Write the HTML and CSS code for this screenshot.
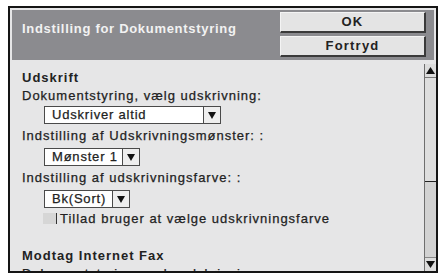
FILE: index.html
```html
<!DOCTYPE html>
<html>
<head>
<meta charset="utf-8">
<link rel="stylesheet" href="styles.css">
</head>
<body>
<div class="frame">
  <div class="header">
    <div class="title">Indstilling for Dokumentstyring</div>
    <div class="buttons">
      <div class="btn">OK</div>
      <div class="btn">Fortryd</div>
    </div>
  </div>
  <div class="content">
    <div class="list">
      <div class="section">Udskrift</div>
      <div class="label">Dokumentstyring, vælg udskrivning:</div>
      <div class="select sel-wide first"><span class="val">Udskriver altid</span><span class="arrow"><svg width="8" height="7" viewBox="0 0 8 7"><polygon points="0,0 8,0 4,7" fill="#111"/></svg></span></div>
      <div class="label gap">Indstilling af Udskrivningsmønster: :</div>
      <div class="select sel-mid"><span class="val">Mønster 1</span><span class="arrow"><svg width="8" height="7" viewBox="0 0 8 7"><polygon points="0,0 8,0 4,7" fill="#111"/></svg></span></div>
      <div class="label gap">Indstilling af udskrivningsfarve: :</div>
      <div class="select sel-small"><span class="val">Bk(Sort)</span><span class="arrow"><svg width="8" height="7" viewBox="0 0 8 7"><polygon points="0,0 8,0 4,7" fill="#111"/></svg></span></div>
      <div class="check"><span class="box"></span><span>Tillad bruger at vælge udskrivningsfarve</span></div>
      <div class="section sec2">Modtag Internet Fax</div>
      <div class="label">Dokumentstyring, vælg udskrivning:</div>
    </div>
    <div class="scrollbar">
      <div class="sb-btn"><svg width="9" height="7" viewBox="0 0 9 7"><polygon points="4.5,0 9,7 0,7" fill="#111"/></svg></div>
      <div class="thumb"></div>
      <div class="track"></div>
      <div class="sb-btn"><svg width="9" height="7" viewBox="0 0 9 7"><polygon points="0,0 9,0 4.5,7" fill="#111"/></svg></div>
    </div>
  </div>
</div>
</body>
</html>
```
FILE: styles.css
```css
html, body {
  margin: 0;
  padding: 0;
  background: #ffffff;
}
body {
  font-family: "Liberation Sans", Arial, sans-serif;
  font-size: 13px;
  color: #222;
}
.frame {
  margin: 6px 0 0 8px;
  width: 430px;
  height: 267px;
  box-sizing: border-box;
  border: 2px solid #151515;
  background: #e6e6e7;
  display: flex;
  flex-direction: column;
  overflow: hidden;
}
.header {
  margin: 2px 2px 0 2px;
  height: 50px;
  flex: none;
  background: #8b8b8f;
  display: flex;
  align-items: flex-start;
  justify-content: space-between;
}
.title {
  margin: 12px 0 0 10px;
  line-height: 14px;
  color: #f2f2f2;
  font-weight: bold;
  letter-spacing: 0.7px;
}
.buttons {
  margin: 2px 8px 0 0;
  display: flex;
  flex-direction: column;
  gap: 3px;
}
.btn {
  width: 146px;
  height: 21px;
  box-sizing: border-box;
  background: #e4e4e4;
  border-top: 1px solid #f4f4f4;
  border-left: 1px solid #f4f4f4;
  border-right: 2px solid #3a3a3a;
  border-bottom: 2px solid #3a3a3a;
  text-align: center;
  line-height: 18px;
  font-weight: bold;
  color: #222;
  letter-spacing: 1.2px;
}
.content {
  flex: 1;
  display: flex;
  min-height: 0;
}
.list {
  flex: 1;
  padding: 9px 0 0 12px;
  overflow: hidden;
  display: flex;
  flex-direction: column;
  align-items: flex-start;
}
.section {
  height: 18px;
  line-height: 18px;
  font-weight: bold;
  letter-spacing: 1px;
}
.sec2 {
  margin-top: 21px;
}
.label {
  height: 18px;
  line-height: 18px;
  letter-spacing: 1px;
  white-space: nowrap;
  -webkit-text-stroke: 0.25px #222;
}
.gap {
  margin-top: 3px;
}
.select {
  margin: 3px 0 0 22px;
  height: 18px;
  box-sizing: border-box;
  border: 1px solid #4a4a4a;
  background: #ffffff;
  display: flex;
}
.select.first { margin-top: 1px; }
.val {
  flex: 1;
  padding-left: 7px;
  line-height: 16px;
  letter-spacing: 0.8px;
  -webkit-text-stroke: 0.25px #222;
}
.arrow {
  width: 16px;
  border-left: 1px solid #4a4a4a;
  background: #eeeeee;
  display: flex;
  align-items: center;
  justify-content: center;
}
.sel-wide { width: 177px; }
.sel-mid { width: 96px; }
.sel-small { width: 86px; }
.check {
  height: 18px;
  margin-top: 3px;
  display: flex;
  align-items: center;
  margin-left: 21px;
  letter-spacing: 1px;
  -webkit-text-stroke: 0.25px #222;
}
.box {
  width: 13px;
  height: 11px;
  background: #d6d6d6;
  border-right: 1px solid #333;
  margin-right: 3px;
}
.scrollbar {
  width: 11px;
  margin-top: 4px;
  border-left: 1px solid #6e6e6e;
  background: #d3d3d3;
  display: flex;
  flex-direction: column;
}
.sb-btn {
  height: 13px;
  flex: none;
  background: #dcdcdc;
  display: flex;
  align-items: center;
  justify-content: center;
}
.thumb {
  height: 103px;
  flex: none;
  border-top: 1px solid #777;
  border-bottom: 1px solid #222;
  background: #dedede;
}
.track {
  flex: 1;
  border-bottom: 1px solid #888;
  background: #d2d2d2;
}
```
